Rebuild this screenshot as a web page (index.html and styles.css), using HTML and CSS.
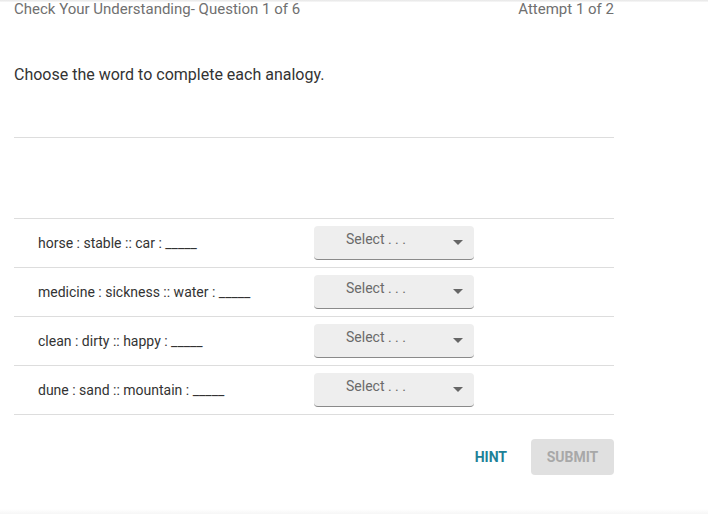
FILE: index.html
```html
<!DOCTYPE html>
<html>
<head>
    <meta charset="utf-8">
    <title>Check Your Understanding</title>
    <link rel="stylesheet" href="styles.css">
</head>
<body>
<div class="top-shade"></div>
<div class="page">
    <div class="header">
        <span>Check Your Understanding- Question 1 of 6</span>
        <span>Attempt 1 of 2</span>
    </div>
    <p class="prompt">Choose the word to complete each analogy.</p>
    <div class="divider"></div>
    <div class="rows">
        <div class="row">
            <div class="analogy">horse : stable :: car : _____</div>
            <div class="select"><span>Select . . .</span><span class="arrow"></span></div>
        </div>
        <div class="row">
            <div class="analogy">medicine : sickness :: water : _____</div>
            <div class="select"><span>Select . . .</span><span class="arrow"></span></div>
        </div>
        <div class="row">
            <div class="analogy">clean : dirty :: happy : _____</div>
            <div class="select"><span>Select . . .</span><span class="arrow"></span></div>
        </div>
        <div class="row">
            <div class="analogy">dune : sand :: mountain : _____</div>
            <div class="select"><span>Select . . .</span><span class="arrow"></span></div>
        </div>
    </div>
    <div class="actions">
        <button class="hint">HINT</button>
        <button class="submit" disabled>SUBMIT</button>
    </div>
</div>
<div class="bottom-shade"></div>
</body>
</html>
```

FILE: styles.css
```css
body {
    margin: 0;
    font-family: Roboto, "Liberation Sans", sans-serif;
    background-color: #fff;
    color: #333;
}
.top-shade {
    height: 2px;
    background: linear-gradient(#e6e6e6, #f8f8f8);
}
.page {
    width: 600px;
    padding: 0 14px;
}
.header {
    display: flex;
    justify-content: space-between;
    margin-top: -2px;
    line-height: 18px;
    font-size: 15px;
    color: #707070;
}
.prompt {
    margin: 0;
    padding-top: 47px;
    font-size: 16px;
    line-height: 20px;
    color: #333;
}
.divider {
    margin-top: 52px;
    height: 1px;
    background-color: #ddd;
}
.rows {
    margin-top: 80px;
    border-top: 1px solid #ddd;
}
.row {
    display: flex;
    align-items: center;
    height: 48px;
    border-bottom: 1px solid #ddd;
    padding-left: 24px;
}
.analogy {
    width: 276px;
    font-size: 14px;
    color: #333;
}
.select {
    display: flex;
    align-items: center;
    justify-content: space-between;
    box-sizing: border-box;
    width: 160px;
    height: 34px;
    padding: 0 11px 7px 32px;
    background-color: #eee;
    border-bottom: 1px solid #8a8a8a;
    border-radius: 4px;
    font-size: 14px;
    color: #6a6a6a;
}
.arrow {
    margin-top: 7px;
    width: 0;
    height: 0;
    border-left: 5px solid transparent;
    border-right: 5px solid transparent;
    border-top: 5px solid #666;
}
.actions {
    display: flex;
    justify-content: flex-end;
    align-items: center;
    gap: 8px;
    margin-top: 24px;
}
button {
    font-family: Roboto, "Liberation Sans", sans-serif;
    font-size: 14px;
    font-weight: bold;
    border: none;
    border-radius: 4px;
    height: 36px;
    padding: 0 16px;
    background: none;
}
.hint {
    color: #1d8197;
}
.submit {
    width: 83px;
    padding: 0;
    background-color: #e0e0e0;
    color: #a8a8a8;
}
.bottom-shade {
    margin-top: 34px;
    height: 6px;
    background: linear-gradient(#fff, #f4f4f4);
}
```
